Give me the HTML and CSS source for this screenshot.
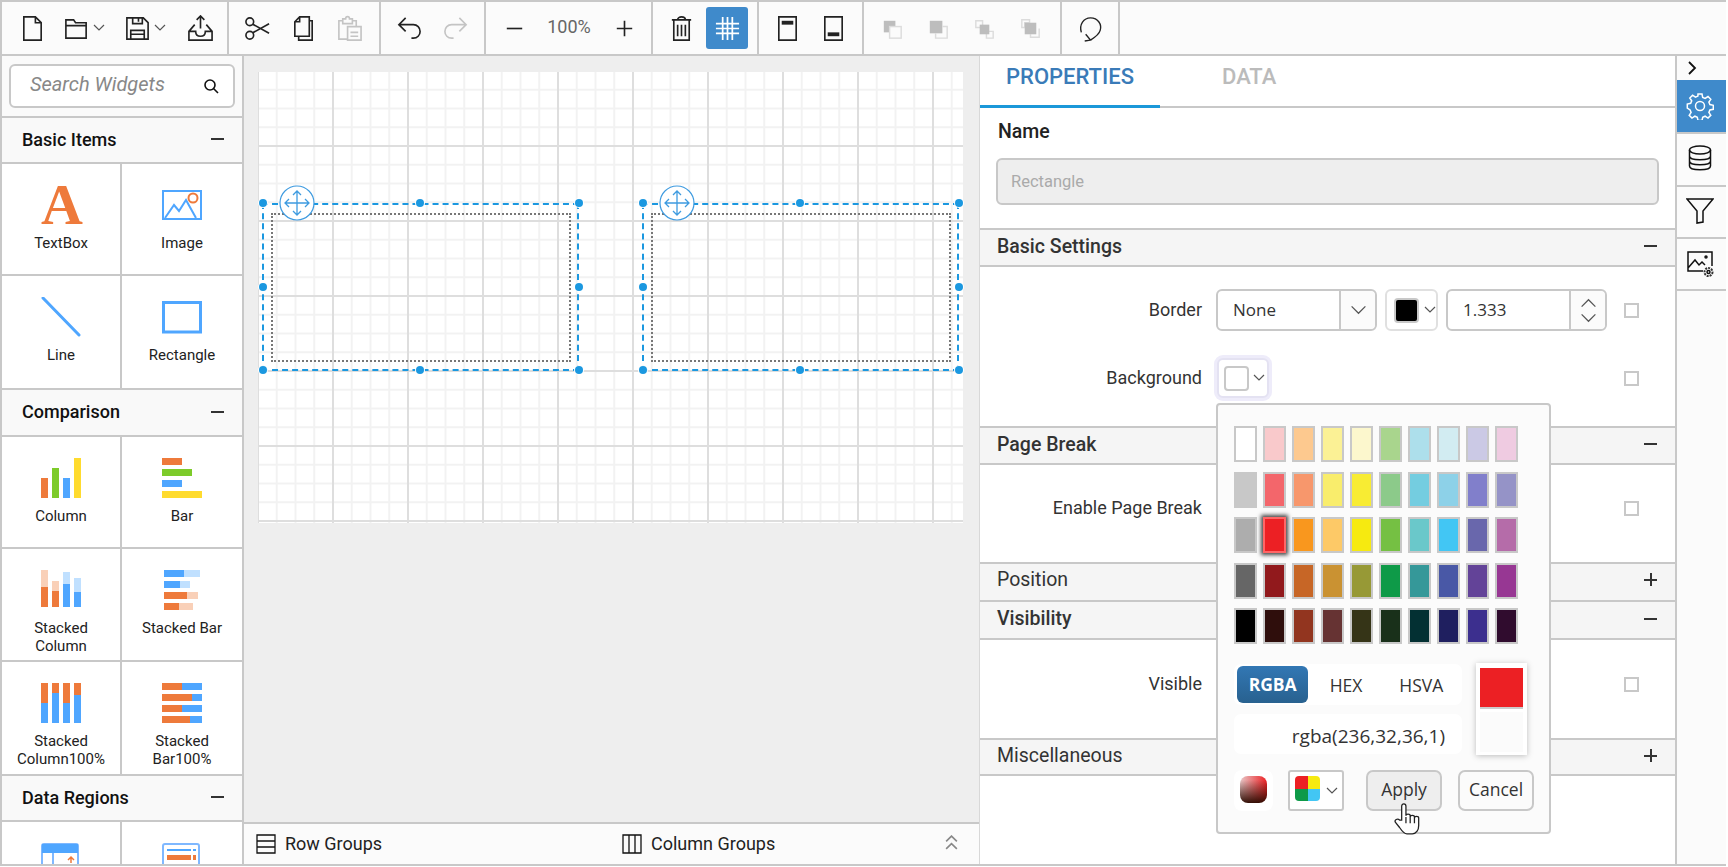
FILE: index.html
```html
<!DOCTYPE html>
<html lang="en">
<head>
  <meta charset="UTF-8">
  <title>Report Designer</title>
  <link rel="stylesheet" href="styles.css">
</head>
<body>
<div class="app">

  <!-- toolbar -->
  <div class="toolbar">
    <div class="tool-group first">
      <button class="tool"><svg class="ico" viewBox="0 0 28 28"><path d="M5 2h12l6 6v18H5z M17 2v6h6"/></svg></button>
      <button class="tool drop"><svg class="ico" viewBox="0 0 28 28"><path d="M3 24V5h8l2 3h11v16z M3 11h21"/></svg><svg class="chev" viewBox="0 0 12 8"><path d="M1 1l5 5 5-5"/></svg></button>
      <button class="tool drop"><svg class="ico" viewBox="0 0 28 28"><path d="M3 3h17l5 5v17H3z M9 3v6h10V3 M15 4v3 M7 25v-9h14v9 M7 20h14"/></svg><svg class="chev" viewBox="0 0 12 8"><path d="M1 1l5 5 5-5"/></svg></button>
      <button class="tool"><svg class="ico" viewBox="0 0 28 28"><path d="M8 10l-6 7v9h24v-9l-6-7 M2 17h7c0 3 2 5 5 5s5-2 5-5h7 M14 1v13 M10 5l4-4 4 4"/></svg></button>
    </div>
    <div class="tool-group">
      <button class="tool"><svg class="ico" viewBox="0 0 28 28"><circle cx="6" cy="7" r="4"/><circle cx="6" cy="21" r="4"/><path d="M9 9.500l17 9.500 M9 18.500l17-9.500"/></svg></button>
      <button class="tool"><svg class="ico" viewBox="0 0 28 28"><path d="M5 7l5-5h10v20H5z M10 2v5H5 M20 6h3v20H9v-4"/></svg></button>
      <button class="tool off"><svg class="ico" viewBox="0 0 28 28"><path d="M17 6h4v6 M7 6H3v19h9 M7 4h3c0-3 4-3 4 0h3v5H7z M12 12h14v14H12z M15 18h8 M15 22h8"/></svg></button>
    </div>
    <div class="tool-group narrow">
      <button class="tool"><svg class="ico" viewBox="0 0 28 28"><path d="M3 10h15c4 0 7 3 7 7s-3 7-7 7h-2 M10 3l-7 7 7 7"/></svg></button>
      <button class="tool off"><svg class="ico" viewBox="0 0 28 28"><path d="M25 10H10c-4 0-7 3-7 7s3 7 7 7h2 M18 3l7 7-7 7"/></svg></button>
    </div>
    <div class="tool-group zoom-group">
      <button class="tool"><svg class="ico" viewBox="0 0 28 28"><path d="M6 14h16"/></svg></button>
      <span class="zoom-value">100%</span>
      <button class="tool"><svg class="ico" viewBox="0 0 28 28"><path d="M6 14h16 M14 6v16"/></svg></button>
    </div>
    <div class="tool-group">
      <button class="tool"><svg class="ico" viewBox="0 0 28 28"><path d="M6 6v20h16V6 M4 5h20 M10 5c0-4 8-4 8 0 M10 10v12 M14 10v12 M18 10v12"/></svg></button>
      <button class="tool active"><svg class="ico" viewBox="0 0 28 28"><path d="M9 2v24 M14 2v24 M19 2v24 M2 9h24 M2 14h24 M2 19h24"/></svg></button>
    </div>
    <div class="tool-group narrow">
      <button class="tool"><svg class="ico" viewBox="0 0 28 28"><path d="M5 2h18v24H5z"/><rect class="solid" x="8" y="6" width="12" height="4"/></svg></button>
      <button class="tool"><svg class="ico" viewBox="0 0 28 28"><path d="M5 2h18v24H5z"/><rect class="solid" x="8" y="18" width="12" height="4"/></svg></button>
    </div>
    <div class="tool-group">
      <button class="tool layer"><svg class="ico" viewBox="0 0 28 28"><rect class="solid" x="5" y="6" width="12" height="12"/><rect class="top" x="11" y="12" width="12" height="12"/></svg></button>
      <button class="tool layer"><svg class="ico" viewBox="0 0 28 28"><rect class="solid" x="5" y="6" width="13" height="13"/><path d="M18 12h5v12H11v-5"/></svg></button>
      <button class="tool layer"><svg class="ico" viewBox="0 0 28 28"><path d="M5 6h7v7H5z M16 17h7v7h-7z"/><rect class="solid" x="9" y="10" width="10" height="10"/></svg></button>
      <button class="tool layer"><svg class="ico" viewBox="0 0 28 28"><path d="M5 5h8v3H8v5H5z M23 14v9h-9v-3"/><rect class="solid" x="8" y="8" width="12" height="12"/></svg></button>
    </div>
    <div class="tool-group last">
      <button class="tool"><svg class="ico thin" viewBox="0 0 28 28"><path d="M4.500 18C2 10 7 3 14 3c8 0 12 7 10 13-1 4-5 7-10 10 M9 20l5 6-6 1"/></svg></button>
    </div>
  </div>

  <div class="main">

    <!-- widgets -->
    <div class="sidebar">
      <div class="search-wrap">
        <div class="search">
          <span class="search-text">Search Widgets</span>
          <svg class="search-ico" viewBox="0 0 16 16"><circle cx="7" cy="7" r="5"/><path d="M10.500 10.500L15 15"/></svg>
        </div>
      </div>

      <div class="acc-head">Basic Items<i class="minus"></i></div>
      <div class="cells">
        <div class="cell"><div class="wicon letter">A</div><div class="wname">TextBox</div></div>
        <div class="cell"><svg class="wicon" viewBox="0 0 40 40"><rect x="1" y="6" width="38" height="28" fill="none" stroke="#4fa6ff" stroke-width="2"/><path d="M3 33l9-13 5 6 7-11 10 18" fill="none" stroke="#4fa6ff" stroke-width="2"/><circle cx="31" cy="13" r="4.500" fill="none" stroke="#ee7a3b" stroke-width="2"/></svg><div class="wname">Image</div></div>
        <div class="cell"><svg class="wicon" viewBox="0 0 40 40"><path d="M2 1l36 37" stroke="#4fa6ff" stroke-width="3" stroke-linecap="round"/></svg><div class="wname">Line</div></div>
        <div class="cell"><svg class="wicon" viewBox="0 0 40 40"><rect x="1.500" y="5.500" width="37" height="29.500" fill="none" stroke="#4fa6ff" stroke-width="3"/></svg><div class="wname">Rectangle</div></div>
      </div>

      <div class="acc-head deep">Comparison<i class="minus"></i></div>
      <div class="cells">
        <div class="cell"><svg class="wicon" viewBox="0 0 40 40"><rect y="20" width="7" height="20" fill="#ee7a3b"/><rect x="11" y="10" width="7" height="30" fill="#7dcb2a"/><rect x="22" y="20" width="7" height="20" fill="#4fa6ff"/><rect x="33" width="7" height="40" fill="#ffdb2e"/></svg><div class="wname">Column</div></div>
        <div class="cell"><svg class="wicon" viewBox="0 0 40 40"><rect width="20" height="7" fill="#ee7a3b"/><rect y="11" width="30" height="7" fill="#7dcb2a"/><rect y="22" width="20" height="7" fill="#4fa6ff"/><rect y="33" width="40" height="7" fill="#ffdb2e"/></svg><div class="wname">Bar</div></div>
        <div class="cell tall"><svg class="wicon" viewBox="0 0 40 40"><rect y="0" width="7" height="17" fill="#f9d0b8"/><rect y="17" width="7" height="20" fill="#ee7a3b"/><rect x="11" y="11" width="7" height="10" fill="#f9d0b8"/><rect x="11" y="21" width="7" height="16" fill="#ee7a3b"/><rect x="22" y="2" width="7" height="12" fill="#c0e0ff"/><rect x="22" y="14" width="7" height="23" fill="#4fa6ff"/><rect x="33" y="8" width="7" height="14" fill="#c0e0ff"/><rect x="33" y="22" width="7" height="15" fill="#4fa6ff"/></svg><div class="wname">Stacked<br>Column</div></div>
        <div class="cell tall"><svg class="wicon" viewBox="0 0 40 40"><rect x="2" width="20" height="7" fill="#4fa6ff"/><rect x="22" width="16" height="7" fill="#c0e0ff"/><rect x="2" y="11" width="16" height="7" fill="#4fa6ff"/><rect x="18" y="11" width="10" height="7" fill="#c0e0ff"/><rect x="2" y="22" width="23" height="7" fill="#ee7a3b"/><rect x="25" y="22" width="11" height="7" fill="#f9d0b8"/><rect x="2" y="33" width="15" height="7" fill="#ee7a3b"/><rect x="17" y="33" width="14" height="7" fill="#f9d0b8"/></svg><div class="wname">Stacked Bar</div></div>
        <div class="cell"><svg class="wicon" viewBox="0 0 40 40"><rect width="7" height="20" fill="#ee7a3b"/><rect y="20" width="7" height="20" fill="#4fa6ff"/><rect x="11" width="7" height="10" fill="#ee7a3b"/><rect x="11" y="10" width="7" height="30" fill="#4fa6ff"/><rect x="22" width="7" height="20" fill="#ee7a3b"/><rect x="22" y="20" width="7" height="20" fill="#4fa6ff"/><rect x="33" width="7" height="12" fill="#ee7a3b"/><rect x="33" y="12" width="7" height="28" fill="#4fa6ff"/></svg><div class="wname">Stacked<br>Column100%</div></div>
        <div class="cell"><svg class="wicon" viewBox="0 0 40 40"><rect width="20" height="7" fill="#ee7a3b"/><rect x="20" width="20" height="7" fill="#4fa6ff"/><rect y="11" width="30" height="7" fill="#ee7a3b"/><rect x="30" y="11" width="10" height="7" fill="#4fa6ff"/><rect y="22" width="20" height="7" fill="#ee7a3b"/><rect x="20" y="22" width="20" height="7" fill="#4fa6ff"/><rect y="33" width="28" height="7" fill="#ee7a3b"/><rect x="28" y="33" width="12" height="7" fill="#4fa6ff"/></svg><div class="wname">Stacked<br>Bar100%</div></div>
      </div>

      <div class="acc-head">Data Regions<i class="minus"></i></div>
      <div class="cells">
        <div class="cell"><svg class="wicon" viewBox="0 0 40 40"><rect x="1" y="1" width="36" height="38" rx="2" fill="none" stroke="#7fb8ff" stroke-width="2"/><rect x="1" y="1" width="36" height="9" fill="#4fa6ff"/><path d="M12 10v30" stroke="#7fb8ff" stroke-width="2"/><path d="M30 20v-5 M27 17l3-3 3 3" fill="none" stroke="#ee7a3b" stroke-width="1.500"/></svg></div>
        <div class="cell"><svg class="wicon" viewBox="0 0 40 40"><rect x="1" y="1" width="36" height="38" rx="2" fill="none" stroke="#7fb8ff" stroke-width="2"/><rect x="5" y="6" width="24" height="2" fill="#4fa6ff"/><rect x="31" y="6" width="3" height="2" fill="#4fa6ff"/><rect x="5" y="12" width="24" height="5" fill="#ee7a3b"/><rect x="31" y="12" width="3" height="5" fill="#ee7a3b"/></svg></div>
      </div>
    </div>

    <!-- design surface -->
    <div class="surface">
      <div class="surface-scroll">
        <div class="page">
          <div class="item">
            <div class="inner"></div>
            <i class="handle h-tl"></i><i class="handle h-tc"></i><i class="handle h-tr"></i>
            <i class="handle h-ml"></i><i class="handle h-mr"></i>
            <i class="handle h-bl"></i><i class="handle h-bc"></i><i class="handle h-br"></i>
            <svg class="move" viewBox="0 0 36 36"><circle cx="18" cy="18" r="17" fill="#fff"/><path d="M18 6v24 M6 18h24 M14 10l4-4 4 4 M14 26l4 4 4-4 M10 14l-4 4 4 4 M26 14l4 4-4 4"/></svg>
          </div>
          <div class="item second">
            <div class="inner"></div>
            <i class="handle h-tl"></i><i class="handle h-tc"></i><i class="handle h-tr"></i>
            <i class="handle h-ml"></i><i class="handle h-mr"></i>
            <i class="handle h-bl"></i><i class="handle h-bc"></i><i class="handle h-br"></i>
            <svg class="move" viewBox="0 0 36 36"><circle cx="18" cy="18" r="17" fill="#fff"/><path d="M18 6v24 M6 18h24 M14 10l4-4 4 4 M14 26l4 4 4-4 M10 14l-4 4 4 4 M26 14l4 4-4 4"/></svg>
          </div>
        </div>
      </div>
      <div class="groups-bar">
        <div class="group-label row-label"><svg class="group-ico" viewBox="0 0 20 20"><path d="M1 1h18v18H1z M1 7h18 M1 13h18"/></svg><span class="group-text">Row Groups</span></div>
        <div class="group-label"><svg class="group-ico" viewBox="0 0 20 20"><path d="M1 1h18v18H1z M7 1v18 M13 1v18"/></svg><span class="group-text">Column Groups</span></div>
        <svg class="group-toggle" viewBox="0 0 12 14"><path d="M1 6l5-5 5 5 M1 13l5-5 5 5"/></svg>
      </div>
    </div>

    <!-- properties -->
    <div class="panel">
      <div class="tabs">
        <div class="tab active">PROPERTIES</div>
        <div class="tab">DATA</div>
      </div>
      <div class="name-block">
        <div class="name-title">Name</div>
        <div class="name-input">Rectangle</div>
      </div>

      <div class="sec-head">Basic Settings<i class="minus"></i></div>
      <div class="sec-body basic">
        <div class="prop-row">
          <label>Border</label>
          <div class="combo">
            <span class="combo-text">None</span>
            <span class="combo-btn"><svg class="chev big" viewBox="0 0 12 8"><path d="M1 1l5 5 5-5"/></svg></span>
          </div>
          <div class="color-btn">
            <span class="swatch-big black"></span>
            <svg class="chev" viewBox="0 0 12 8"><path d="M1 1l5 5 5-5"/></svg>
          </div>
          <div class="combo numeric">
            <span class="combo-text">1.333</span>
            <span class="combo-btn spin">
              <svg class="chev big" viewBox="0 0 12 8"><path d="M1 7l5-5 5 5"/></svg>
              <svg class="chev big" viewBox="0 0 12 8"><path d="M1 1l5 5 5-5"/></svg>
            </span>
          </div>
          <span class="check"></span>
        </div>
        <div class="prop-row bg-row">
          <label>Background</label>
          <div class="color-btn focused">
            <span class="swatch-big"></span>
            <svg class="chev" viewBox="0 0 12 8"><path d="M1 1l5 5 5-5"/></svg>
          </div>
          <span class="check"></span>
        </div>
      </div>

      <div class="sec-head">Page Break<i class="minus"></i></div>
      <div class="sec-body single pagebreak">
        <div class="prop-row"><label>Enable Page Break</label><span class="check"></span></div>
      </div>

      <div class="sec-head collapsed position">Position<i class="plus"></i></div>
      <div class="sec-head visibility">Visibility<i class="minus"></i></div>
      <div class="sec-body single">
        <div class="prop-row"><label>Visible</label><span class="check"></span></div>
      </div>
      <div class="sec-head collapsed">Miscellaneous<i class="plus"></i></div>

      <!-- colour popup -->
      <div class="popup">
        <div class="palette">
          <span class="sw" style="background:#fff"></span><span class="sw" style="background:#f9c9cb"></span><span class="sw" style="background:#fdc98f"></span><span class="sw" style="background:#fbf195"></span><span class="sw" style="background:#fcf7cd"></span><span class="sw" style="background:#a9d58d"></span><span class="sw" style="background:#addfeb"></span><span class="sw" style="background:#d2ecf2"></span><span class="sw" style="background:#cbc9e5"></span><span class="sw" style="background:#efcbe1"></span>
          <span class="sw" style="background:#c8c8c8"></span><span class="sw" style="background:#f3666b"></span><span class="sw" style="background:#f7976c"></span><span class="sw" style="background:#f9ed6c"></span><span class="sw" style="background:#f8ec33"></span><span class="sw" style="background:#8cca8a"></span><span class="sw" style="background:#74cde0"></span><span class="sw" style="background:#8dd1e8"></span><span class="sw" style="background:#817fcb"></span><span class="sw" style="background:#9593c7"></span>
          <span class="sw" style="background:#adadad"></span><span class="sw picked" style="background:#ec2024"></span><span class="sw" style="background:#f9971e"></span><span class="sw" style="background:#fdc967"></span><span class="sw" style="background:#f6ea10"></span><span class="sw" style="background:#75c043"></span><span class="sw" style="background:#6ac8ca"></span><span class="sw" style="background:#42c6f4"></span><span class="sw" style="background:#6967ac"></span><span class="sw" style="background:#b56ca9"></span>
          <span class="sw" style="background:#666"></span><span class="sw" style="background:#91191c"></span><span class="sw" style="background:#c76626"></span><span class="sw" style="background:#ca9232"></span><span class="sw" style="background:#979936"></span><span class="sw" style="background:#0e9a48"></span><span class="sw" style="background:#359899"></span><span class="sw" style="background:#4958a6"></span><span class="sw" style="background:#634398"></span><span class="sw" style="background:#973793"></span>
          <span class="sw" style="background:#000"></span><span class="sw" style="background:#2f0e0c"></span><span class="sw" style="background:#92351f"></span><span class="sw" style="background:#663333"></span><span class="sw" style="background:#353417"></span><span class="sw" style="background:#19301a"></span><span class="sw" style="background:#033033"></span><span class="sw" style="background:#1f1f5f"></span><span class="sw" style="background:#3c2f8e"></span><span class="sw" style="background:#300c2e"></span>
        </div>
        <div class="value-area">
          <div class="value-left">
            <div class="modes">
              <span class="mode on">RGBA</span>
              <span class="mode hex">HEX</span>
              <span class="mode">HSVA</span>
            </div>
            <div class="value-text">rgba(236,32,36,1)</div>
          </div>
          <div class="preview"><span class="preview-new"></span><span class="preview-old"></span></div>
        </div>
        <div class="popup-actions">
          <span class="picker-wrap"><span class="picker"></span></span>
          <span class="palette-btn">
            <span class="four"><i class="c1"></i><i class="c2"></i><i class="c3"></i><i class="c4"></i></span>
            <svg class="chev" viewBox="0 0 12 8"><path d="M1 1l5 5 5-5"/></svg>
          </span>
          <span class="btn apply">Apply</span>
          <span class="btn">Cancel</span>
        </div>
        <svg class="hand" viewBox="0 0 26 32"><path d="M8 17V4c0-3 4-3 4 0v9c0-2 4-2 4 0v1c0-2 4-2 4 0v1c0-2 4-2 4 0v7c0 4-2 8-6 8h-5c-3 0-5-3-7-6l-4-5c-1-2 2-4 4-2z"/><path d="M12 14v6 M16 14v6 M20 15v5"/></svg>
      </div>
    </div>

    <!-- side tabs -->
    <div class="strip">
      <div class="strip-toggle"><svg viewBox="0 0 10 14"><path d="M2 1l6 6-6 6"/></svg></div>
      <div class="strip-btn on"><svg viewBox="0 0 28 28"><circle cx="14" cy="14" r="4.500"/><path d="M12 2h4l.7 3.400 2.400 1 2.900-1.900 2.800 2.800-1.900 2.900 1 2.400 3.400.7v4l-3.400.7-1 2.400 1.900 2.900-2.800 2.800-2.900-1.900-2.400 1-.7 3.400h-4l-.7-3.400-2.400-1-2.900 1.900-2.800-2.800 1.900-2.900-1-2.400L1.300 16v-4l3.400-.7 1-2.400-1.900-2.900 2.800-2.800 2.900 1.900 2.400-1z"/></svg></div>
      <div class="strip-btn db"><svg viewBox="0 0 28 28"><ellipse cx="14" cy="6" rx="10.500" ry="4"/><path d="M3.500 6v16c0 5 21 5 21 0V6 M3.500 12c0 5 21 5 21 0 M3.500 17c0 5 21 5 21 0"/></svg></div>
      <div class="strip-btn filter"><svg viewBox="0 0 28 28"><path d="M1 3h26L17 15v11l-6 1V15z"/></svg></div>
      <div class="strip-btn img"><svg viewBox="0 0 28 28"><path d="M17 21H2V2h24v14 M2 18l7-8 4 5 3-3 3 3"/><circle cx="20" cy="7" r="1"/><circle cx="22.500" cy="22" r="1.500"/><circle class="cog" cx="22.500" cy="22" r="4"/></svg></div>
    </div>
  </div>
</div>
</body>
</html>
```

FILE: styles.css
```css
* {
  box-sizing: border-box;
}

html, body {
  margin: 0;
  height: 100%;
  background: #fff;
  overflow: hidden;
}

body {
  font-family: Roboto, "Liberation Sans", sans-serif;
  color: #222;
}

.app {
  width: 1726px;
  height: 866px;
  border: 2px solid #c8c8c8;
  border-right: 0;
  display: flex;
  flex-direction: column;
}

/* toolbar */
.toolbar {
  height: 54px;
  flex: none;
  display: flex;
  background: #fbfbfb;
  border-bottom: 2px solid #c8c8c8;
}

.tool-group {
  display: flex;
  align-items: center;
  padding: 0 7px 0 5px;
  border-right: 2px solid #c8c8c8;
}

.tool-group.first {
  padding: 0 4px 0 7px;
}

.tool-group.narrow {
  padding-right: 6px;
}

.tool-group.zoom-group {
  padding-right: 4px;
}

.tool-group.last {
  padding-right: 5px;
}

.tool {
  width: 46px;
  height: 42px;
  padding: 0;
  border: 0;
  border-radius: 3px;
  background: none;
  display: flex;
  align-items: center;
  justify-content: center;
}

.tool.drop {
  width: 61px;
  justify-content: flex-start;
  padding-left: 8px;
}

.ico {
  width: 27px;
  height: 27px;
  flex: none;
  fill: none;
  stroke: #222;
  stroke-width: 1.7;
}

.ico .solid {
  fill: #222;
  stroke: none;
}

.ico.thin {
  stroke-width: 1.400;
}

.tool.off .ico {
  stroke: #c4c4c4;
}

.tool.layer .ico {
  stroke: #dcdcdc;
  stroke-width: 1.500;
}

.tool.layer .solid {
  fill: #bdbdbd;
}

.tool.layer .top {
  fill: #fbfbfb;
}

.tool.active {
  width: 42px;
  margin: 0 2px;
  background: #3f8acb;
}

.tool.active .ico {
  stroke: #fff;
  stroke-width: 1.800;
}

.chev {
  width: 12px;
  height: 8px;
  flex: none;
  fill: none;
  stroke: #555;
  stroke-width: 1.200;
}

.tool.drop .chev {
  margin-left: 3px;
}

.chev.big {
  width: 17px;
  height: 11px;
  stroke-width: .9;
}

.zoom-value {
  width: 64px;
  padding-bottom: 3px;
  text-align: center;
  font-size: 18px;
  color: #666;
}

/* main columns */
.main {
  flex: 1;
  min-height: 0;
  display: flex;
}

.sidebar {
  width: 242px;
  flex: none;
  border-right: 2px solid #c8c8c8;
  background: #fff;
  overflow: hidden;
}

.search-wrap {
  height: 62px;
  padding: 8px 7px 0;
  background: #fafafa;
  border-bottom: 2px solid #c8c8c8;
}

.search {
  height: 44px;
  background: #fff;
  border: 2px solid #c8c8c8;
  border-radius: 6px;
  display: flex;
  align-items: center;
  justify-content: space-between;
  padding: 0 14px 0 19px;
}

.search-text {
  padding-bottom: 4px;
  font-size: 20px;
  font-style: italic;
  color: #888;
}

.search-ico {
  width: 16px;
  height: 16px;
  fill: none;
  stroke: #111;
  stroke-width: 1.600;
}

.acc-head {
  height: 46px;
  display: flex;
  align-items: center;
  justify-content: space-between;
  padding: 0 18px 2px 20px;
  background: #f9f9f9;
  border-bottom: 2px solid #c8c8c8;
  font-size: 18px;
  font-weight: 500;
  color: #111;
}

.acc-head.deep {
  height: 47px;
}

.minus, .plus {
  position: relative;
  width: 13px;
  height: 2px;
  background: #333;
}

.plus::after {
  content: "";
  position: absolute;
  left: 5.500px;
  top: -5.500px;
  width: 2px;
  height: 13px;
  background: #333;
}

.cells {
  display: grid;
  grid-template-columns: 120px 120px;
  border-bottom: 2px solid #c8c8c8;
}

.cell {
  height: 112px;
  padding-top: 21px;
  border-bottom: 2px solid #c8c8c8;
  text-align: center;
  background: #fff;
}

.cell:nth-child(odd) {
  border-right: 2px solid #c8c8c8;
}

.cell:nth-last-child(-n+2) {
  border-bottom: 0;
}

.cell.tall {
  height: 113px;
}

.wicon {
  display: block;
  width: 40px;
  height: 40px;
  margin: 0 auto;
}

.cell:nth-child(even) .wicon {
  margin-left: 40px;
}

.letter {
  font-family: "Liberation Serif", serif;
  font-weight: 700;
  font-size: 58px;
  line-height: 40px;
  color: #ee7a3b;
}

.wname {
  margin-top: 9px;
  font-size: 15px;
  line-height: 18px;
  color: #222;
}

/* design surface */
.surface {
  width: 736px;
  flex: none;
  display: flex;
  flex-direction: column;
  background: #eee;
  border-right: 1px solid #d8d8d8;
}

.surface-scroll {
  flex: 1;
  padding: 16px 0 0 14px;
}

.page {
  position: relative;
  width: 705px;
  height: 451px;
  background-color: #fff;
  background-image:
    linear-gradient(to right, #dedede 2px, transparent 2px),
    linear-gradient(to bottom, #dedede 2px, transparent 2px),
    linear-gradient(to right, #f2f2f2 2px, transparent 2px),
    linear-gradient(to bottom, #f2f2f2 2px, transparent 2px);
  background-size: 75px 75px, 75px 75px, 18.750px 18.750px, 18.750px 18.750px;
  background-position: -1px -2px;
}

.item {
  position: absolute;
  left: 4px;
  top: 131px;
  width: 317px;
  height: 168px;
  border: 2px dashed #1b98e0;
}

.item.second {
  left: 384px;
}

.inner {
  position: absolute;
  left: 7px;
  right: 6px;
  top: 8px;
  bottom: 7px;
  border: 2px dotted #777;
}

.handle {
  position: absolute;
  width: 8px;
  height: 8px;
  border-radius: 50%;
  background: #1b98e0;
  box-shadow: 0 0 0 1px #fff;
}

.h-tl, .h-tc, .h-tr { top: -6px; }
.h-ml, .h-mr { top: 78px; }
.h-bl, .h-bc, .h-br { bottom: -5px; }
.h-tl, .h-ml, .h-bl { left: -5px; }
.h-tc, .h-bc { left: 152px; }
.h-tr, .h-mr, .h-br { right: -6px; }

.move {
  position: absolute;
  left: 15px;
  top: -20px;
  width: 36px;
  height: 36px;
}

.move circle {
  stroke: #3e9be0;
  stroke-width: 1.200;
}

.move path {
  fill: none;
  stroke: #3e9be0;
  stroke-width: 1.300;
}

.groups-bar {
  height: 42px;
  flex: none;
  display: flex;
  align-items: center;
  background: #fbfbfb;
  border-top: 2px solid #c8c8c8;
  padding-left: 12px;
  position: relative;
  font-size: 18px;
  color: #222;
}

.group-label {
  display: flex;
  align-items: center;
  gap: 9px;
}

.group-text {
  padding-bottom: 2px;
}

.row-label {
  width: 366px;
}

.group-ico {
  width: 20px;
  height: 20px;
  fill: none;
  stroke: #111;
  stroke-width: 1.300;
}

.group-toggle {
  position: absolute;
  right: 21px;
  top: 11px;
  width: 13px;
  height: 15px;
  fill: none;
  stroke: #888;
  stroke-width: 1.500;
}

/* properties panel */
.panel {
  position: relative;
  flex: 1;
  background: #fff;
}

.tabs {
  height: 52px;
  display: flex;
  border-bottom: 2px solid #c8c8c8;
}

.tab {
  width: 180px;
  height: 52px;
  padding: 6px 0 0 26px;
  font-size: 22px;
  font-weight: 500;
  line-height: 30px;
  color: #bbb;
}

.tab.active {
  color: #3a7bb8;
  border-bottom: 3px solid #1b98d9;
}

.tab + .tab {
  padding-left: 62px;
}

.name-block {
  height: 120px;
  padding: 12px 16px 0;
}

.name-title {
  padding-left: 2px;
  font-size: 19.500px;
  font-weight: 500;
  line-height: 24px;
  color: #222;
}

.name-input {
  height: 47px;
  margin-top: 14px;
  padding-left: 13px;
  background: #eee;
  border: 2px solid #c8c8c8;
  border-radius: 6px;
  font-size: 16.500px;
  line-height: 44px;
  color: #aaa;
}

.sec-head {
  height: 39px;
  display: flex;
  align-items: center;
  justify-content: space-between;
  padding: 0 18px 3px 17px;
  background: #f5f5f5;
  border-top: 2px solid #c8c8c8;
  border-bottom: 2px solid #c8c8c8;
  font-size: 19.500px;
  font-weight: 500;
  color: #333;
}

.sec-head.collapsed {
  font-weight: 400;
  height: 38px;
}

.sec-head.position {
  border-bottom: 0;
  padding-bottom: 5px;
}

.sec-head.visibility {
  height: 40px;
}

.sec-body.basic {
  height: 159px;
  padding-top: 22px;
}

.sec-body.single {
  height: 98px;
  padding-top: 23px;
}

.sec-body.pagebreak {
  height: 97px;
  padding-top: 22px;
}

.prop-row {
  display: flex;
  align-items: center;
  height: 42px;
  font-size: 18px;
  color: #333;
}

.prop-row label {
  width: 222px;
  padding-bottom: 2px;
  text-align: right;
  margin-right: 14px;
}

.prop-row .check {
  margin-left: 17px;
}

.bg-row {
  margin-top: 27px;
  height: 40px;
}

.bg-row .check {
  margin-left: 355px;
}

.sec-body.single .check {
  margin-left: 408px;
}

.combo {
  width: 161px;
  height: 42px;
  display: flex;
  background: #fff;
  border: 2px solid #c8c8c8;
  border-radius: 6px;
  font-family: "Open Sans", sans-serif;
  font-size: 17px;
}

.combo-text {
  flex: 1;
  padding-left: 15px;
  line-height: 38px;
  color: #333;
}

.combo-btn {
  width: 36px;
  display: flex;
  flex-direction: column;
  align-items: center;
  justify-content: center;
  gap: 5px;
  background: #fbfbfb;
  border-left: 2px solid #c8c8c8;
  border-radius: 0 5px 5px 0;
}

.combo.numeric {
  margin-left: 8px;
}

.color-btn {
  width: 53px;
  height: 42px;
  margin-left: 8px;
  display: flex;
  align-items: center;
  gap: 5px;
  padding-left: 7px;
  border: 2px solid #e0e0e0;
  border-radius: 6px;
  background: #fff;
}

.color-btn.focused {
  width: 52px;
  height: 40px;
  margin-left: 1px;
  padding-left: 5px;
  gap: 4px;
  border-color: #e4e2f2;
  box-shadow: 0 0 0 3px #eeecfa;
}

.swatch-big {
  width: 25px;
  height: 25px;
  border: 2px solid #c8c8c8;
  border-radius: 4px;
  background: #fff;
}

.swatch-big.black {
  background: #000;
}

.check {
  width: 15px;
  height: 15px;
  flex: none;
  border: 2px solid #c8c8c8;
  background: #fff;
}

/* colour popup, sits over the panel */
.popup {
  position: absolute;
  left: 236px;
  top: 347px;
  width: 335px;
  height: 431px;
  padding: 21px 15px 0 16px;
  background: #fbfbfb;
  border: 2px solid #c8c8c8;
  border-radius: 4px;
  font-family: "Open Sans", sans-serif;
  color: #333;
}

.palette {
  display: grid;
  grid-template-columns: repeat(10, 23px);
  grid-auto-rows: 36px;
  column-gap: 6px;
  row-gap: 9.500px;
}

.sw {
  border: 2px solid #c8c8c8;
}

.sw.picked {
  box-shadow: 0 0 4px 2px #444;
  border-color: #f66;
}

.value-area {
  display: flex;
  margin-top: 20px;
}

.value-left {
  width: 228px;
}

.modes {
  height: 41px;
  display: flex;
  align-items: center;
  padding: 0 3px;
  background: #fff;
  border-radius: 7px;
  font-size: 17.500px;
}

.mode {
  width: 76px;
  text-align: center;
}

.mode.on {
  width: 72px;
  height: 37px;
  line-height: 37px;
  font-weight: 700;
  color: #fff;
  background: linear-gradient(#3277b4, #28618f);
  border-radius: 6px;
}

.value-text {
  height: 40px;
  margin-top: 9px;
  padding-right: 17px;
  background: #fff;
  border-radius: 7px;
  text-align: right;
  font-size: 19px;
  line-height: 44px;
}

.preview {
  width: 51px;
  height: 92px;
  margin: -1px 0 0 14px;
  padding: 5px 4px;
  background: #fff;
  box-shadow: 0 1px 6px rgba(0, 0, 0, .25);
}

.preview-new {
  display: block;
  height: 41px;
  background: #ec2024;
  border-bottom: 2px solid #ccc;
}

.preview-old {
  display: block;
  height: 40px;
  margin-top: 3px;
  background: #fbfbfb;
}

.popup-actions {
  position: relative;
  display: flex;
  align-items: center;
  margin-top: 15px;
  height: 41px;
}

.picker-wrap {
  width: 39px;
  height: 41px;
  padding: 6px;
  background: #fff;
  border-radius: 8px;
}

.picker {
  display: block;
  width: 27px;
  height: 27px;
  border-radius: 8px;
  background: linear-gradient(to bottom, transparent 15%, rgba(42, 10, 0, .95)), linear-gradient(to right, #e8c8c8, #ec2024);
}

.palette-btn {
  width: 56px;
  height: 41px;
  margin-left: 15px;
  display: flex;
  align-items: center;
  gap: 6px;
  padding-left: 5px;
  background: #fff;
  border: 2px solid #c8c8c8;
  border-radius: 3px;
}

.four {
  width: 25px;
  height: 25px;
  margin-top: -4px;
  display: grid;
  grid-template-columns: 1fr 1fr;
  border-radius: 4px;
  overflow: hidden;
}

.c1 { background: #ec2024; }
.c2 { background: #f6ea10; }
.c3 { background: #0e9a48; }
.c4 { background: #42c6f4; }

.btn {
  width: 76px;
  height: 41px;
  margin-left: 16px;
  text-align: center;
  font-size: 17.500px;
  line-height: 35px;
  border: 2px solid #c8c8c8;
  border-radius: 7px;
  background: #fbfbfb;
}

.btn.apply {
  margin-left: 22px;
  background: #eee;
}

.hand {
  position: absolute;
  left: 175px;
  top: 397px;
  width: 28px;
  height: 34px;
  fill: #fff;
  stroke: #222;
  stroke-width: 1.200;
}

/* right strip */
.strip {
  width: 51px;
  flex: none;
  background: #fbfbfb;
  border-left: 2px solid #c8c8c8;
}

.strip-toggle {
  height: 24px;
  display: flex;
  align-items: center;
  padding-left: 10px;
}

.strip-toggle svg {
  width: 10px;
  height: 14px;
  fill: none;
  stroke: #111;
  stroke-width: 1.800;
}

.strip-btn {
  height: 52px;
  display: flex;
  align-items: center;
  justify-content: center;
  padding-right: 3px;
  border-top: 2px solid #c8c8c8;
}

.strip-btn.db {
  height: 53px;
  padding-bottom: 4px;
}

.strip-btn.filter {
  padding-bottom: 5px;
}

.strip-btn.img {
  border-bottom: 2px solid #c8c8c8;
  height: 54px;
}

.strip-btn svg {
  width: 28px;
  height: 28px;
  fill: none;
  stroke: #111;
  stroke-width: 1.500;
}

.strip-btn .cog {
  stroke-dasharray: 2 1;
  stroke-width: 2;
  stroke: #333;
}

.strip-btn.on {
  background: #3f8acb;
  border-top: 0;
}

.strip-btn.on svg {
  stroke: #fff;
}
```
